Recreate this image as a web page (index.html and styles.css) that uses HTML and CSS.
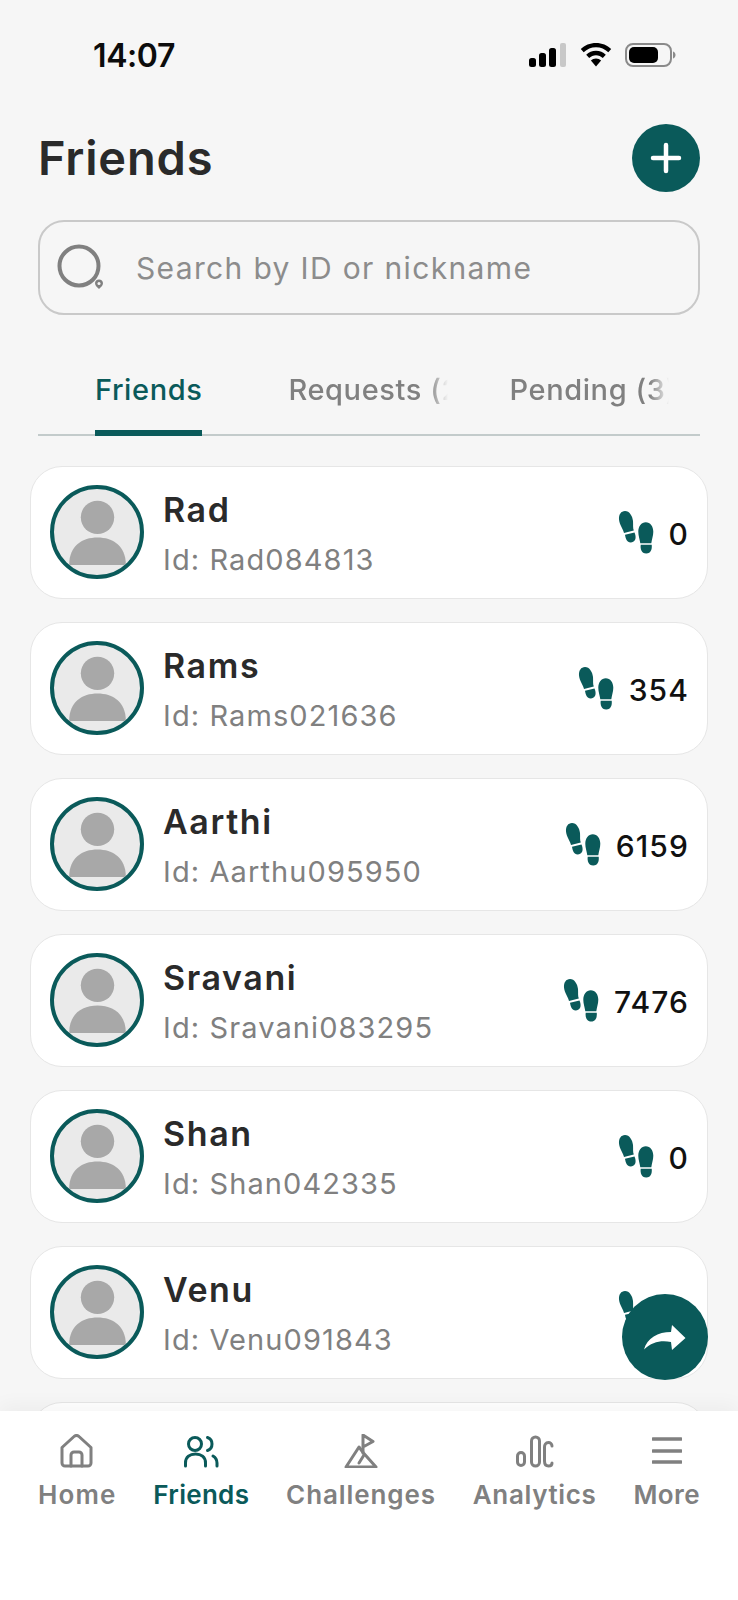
FILE: index.html
```html
<!DOCTYPE html>
<html lang="en">
<head>
<meta charset="utf-8">
<title>Friends</title>
<link rel="stylesheet" href="styles.css">
</head>
<body>
<main class="screen">
  <div class="status">
    <span class="time">14:07</span>
    <div class="status-icons">
      <svg class="signal" width="38" height="24" viewBox="0 0 38 24"><rect x="0" y="15" width="7" height="9" rx="2.5"/><rect x="10" y="10" width="7" height="14" rx="2.5"/><rect x="20" y="5" width="7" height="19" rx="2.5"/><rect class="signal-off" x="31" y="0" width="6" height="24" rx="2"/></svg>
      <svg class="wifi" width="32" height="24" viewBox="0 0 32 24"><path d="M16 0C10 0 4.700 2.300 .8 6l2.900 3.300C7 6.200 11.300 4.300 16 4.300s9 1.900 12.300 5L31.200 6C27.300 2.300 22 0 16 0z"/><path d="M16 7.800c-3.800 0-7.200 1.500-9.800 3.900l3 3.300c1.800-1.700 4.200-2.800 6.800-2.800s5 1.100 6.800 2.800l3-3.300C23.200 9.300 19.800 7.800 16 7.800z"/><path d="M16 15.500c-2 0-3.800.8-5.100 2L16 23.500l5.100-6c-1.300-1.200-3.100-2-5.100-2z"/></svg>
      <svg class="battery" width="52" height="24" viewBox="0 0 52 24"><rect x="1" y="1" width="45" height="22" rx="7" fill="none" stroke="#8a8a8a" stroke-width="2"/><rect x="4" y="4" width="29" height="16" rx="5"/><path class="nub" d="M48 8.500c1.800.6 2.500 2 2.500 3.500s-.7 2.900-2.500 3.500z"/></svg>
    </div>
  </div>

  <header class="title-row">
    <h1 class="title">Friends</h1>
    <button class="add" aria-label="Add friend"><svg width="34" height="34" viewBox="0 0 34 34"><path d="M4 17h26M17 4v26" stroke="#fff" stroke-width="4.500" stroke-linecap="round"/></svg></button>
  </header>

  <div class="search">
    <svg class="search-icon" width="48" height="48" viewBox="0 0 48 48"><circle cx="22" cy="22" r="19.500" fill="none" stroke="#808080" stroke-width="4"/><path d="M42 35.500c2.400 0 4 1.700 4 3.700 0 2.300-2.400 4.300-4 5.800-1.600-1.500-4-3.500-4-5.800 0-2 1.600-3.700 4-3.700z" fill="#808080"/><circle cx="42" cy="39.500" r="1.500" fill="#f6f6f6"/></svg>
    <span class="search-text">Search by ID or nickname</span>
  </div>

  <nav class="tabs">
    <span class="tab tab-active">Friends</span>
    <span class="tab tab-requests"><span class="tab-clip">Requests (2)</span></span>
    <span class="tab tab-pending"><span class="tab-clip">Pending (3)</span></span>
  </nav>

  <section class="list">
    <article class="card">
      <div class="avatar"><svg viewBox="0 0 85 85"><circle cx="43" cy="28" r="16.500"/><path d="M15 75C15 56 28 48 43 48s28 8 28 27z"/></svg></div>
      <div class="who"><div class="name">Rad</div><div class="uid">Id: Rad084813</div></div>
      <div class="steps"><svg class="feet" width="36" height="44" viewBox="0 0 36 44"><use href="#feet"/></svg><span>0</span></div>
    </article>
    <article class="card">
      <div class="avatar"><svg viewBox="0 0 85 85"><circle cx="43" cy="28" r="16.500"/><path d="M15 75C15 56 28 48 43 48s28 8 28 27z"/></svg></div>
      <div class="who"><div class="name">Rams</div><div class="uid">Id: Rams021636</div></div>
      <div class="steps"><svg class="feet" width="36" height="44" viewBox="0 0 36 44"><use href="#feet"/></svg><span>354</span></div>
    </article>
    <article class="card">
      <div class="avatar"><svg viewBox="0 0 85 85"><circle cx="43" cy="28" r="16.500"/><path d="M15 75C15 56 28 48 43 48s28 8 28 27z"/></svg></div>
      <div class="who"><div class="name">Aarthi</div><div class="uid">Id: Aarthu095950</div></div>
      <div class="steps"><svg class="feet" width="36" height="44" viewBox="0 0 36 44"><use href="#feet"/></svg><span>6159</span></div>
    </article>
    <article class="card">
      <div class="avatar"><svg viewBox="0 0 85 85"><circle cx="43" cy="28" r="16.500"/><path d="M15 75C15 56 28 48 43 48s28 8 28 27z"/></svg></div>
      <div class="who"><div class="name">Sravani</div><div class="uid">Id: Sravani083295</div></div>
      <div class="steps"><svg class="feet" width="36" height="44" viewBox="0 0 36 44"><use href="#feet"/></svg><span>7476</span></div>
    </article>
    <article class="card">
      <div class="avatar"><svg viewBox="0 0 85 85"><circle cx="43" cy="28" r="16.500"/><path d="M15 75C15 56 28 48 43 48s28 8 28 27z"/></svg></div>
      <div class="who"><div class="name">Shan</div><div class="uid">Id: Shan042335</div></div>
      <div class="steps"><svg class="feet" width="36" height="44" viewBox="0 0 36 44"><use href="#feet"/></svg><span>0</span></div>
    </article>
    <article class="card">
      <div class="avatar"><svg viewBox="0 0 85 85"><circle cx="43" cy="28" r="16.500"/><path d="M15 75C15 56 28 48 43 48s28 8 28 27z"/></svg></div>
      <div class="who"><div class="name">Venu</div><div class="uid">Id: Venu091843</div></div>
      <div class="steps"><svg class="feet" width="36" height="44" viewBox="0 0 36 44"><use href="#feet"/></svg><span>0</span></div>
    </article>
    <article class="card"></article>
  </section>

  <button class="fab" aria-label="Share"><svg width="42" height="25" viewBox="0 0 42 25"><path d="M0 24.500C3 13 14 7 27 7L28 0L41.500 13L28 25L27 17C17 15 8 17 0 24.500z" fill="#fff"/></svg></button>

  <nav class="bottom">
    <div class="nav-item nav-home">
      <svg width="34" height="34" viewBox="0 0 34 34" class="nav-icon"><path d="M2 13.500V29a3 3 0 0 0 3 3H28a3 3 0 0 0 3-3V13.500L19 2.500a3.500 3.500 0 0 0-5 0z"/><path d="M11 32V21a3 3 0 0 1 3-3h5a3 3 0 0 1 3 3v11"/></svg>
      <span>Home</span>
    </div>
    <div class="nav-item nav-active">
      <svg width="36" height="34" viewBox="0 0 36 34" class="nav-icon"><circle cx="12" cy="10" r="6.500"/><path d="M24.500 3.500c3 1 4.500 3.500 4.500 6.500s-1.500 5.500-4.500 6.500"/><path d="M2.500 32v-3c0-6 4.500-9 10-9s10 3 10 9v3"/><path d="M30 22c2.500 1.500 4 4 4 7v3"/></svg>
      <span>Friends</span>
    </div>
    <div class="nav-item">
      <svg width="34" height="34" viewBox="0 0 34 34" class="nav-icon"><path d="M2 33 15 13l4.500 6L32 33z"/><path d="M19 19V1l10 6.500-10 5.500"/><path d="M20 21l-5 8"/></svg>
      <span>Challenges</span>
    </div>
    <div class="nav-item nav-analytics">
      <svg width="38" height="34" viewBox="0 0 38 34" class="nav-icon"><rect x="1.500" y="18.500" width="7" height="13" rx="3.500"/><rect x="15.500" y="3" width="8" height="29" rx="4"/><path d="M36 12C36 9.500 34 8.500 32.500 8.500 29.500 8.500 28.500 11 28.500 13V27C28.500 30 30 32 32.500 32 34.500 32 36 31 36 29"/></svg>
      <span>Analytics</span>
    </div>
    <div class="nav-item nav-last">
      <svg width="30" height="34" viewBox="0 0 30 34" class="nav-icon nav-more"><path d="M1 5h28M1 17h28M1 28h28"/></svg>
      <span>More</span>
    </div>
  </nav>
</main>

<svg class="defs" width="0" height="0" aria-hidden="true">
  <defs>
    <g id="feet" fill="#0a5a5a">
      <path d="M7 1C11.500 1 14.500 6 15 11c.3 4-.3 7 .8 9.500L6 23C5.500 19.500 1.500 15 1 9.500.7 4.500 3 1 7 1z"/>
      <path d="M7 24.800l9.500-2.300C18.500 27 18 32 13 32.500 9 32.800 7.500 28.500 7 24.800z"/>
      <path d="M27.800 12.300c4.400 0 7.500 3.900 7.500 9.500 0 4-1.500 7.800-2 11.500h-11c-.5-3.700-2-7.500-2-11.500 0-5.600 3.100-9.500 7.500-9.500z"/>
      <path d="M22.700 34.800h11c.5 3.800-.5 8.700-5.500 8.700s-6-4.900-5.500-8.700z"/>
    </g>
  </defs>
</svg>
</body>
</html>
```
FILE: styles.css
```css
* { box-sizing: border-box; }
html, body { margin: 0; padding: 0; }
body { font-family: Inter, "Noto Sans", sans-serif; background: #f6f6f6; }
.defs { position: absolute; }

.screen {
  position: relative;
  width: 738px;
  height: 1600px;
  overflow: hidden;
  background: #f6f6f6;
}

.status {
  display: flex;
  justify-content: space-between;
  align-items: center;
  height: 110px;
  padding: 0 61px 0 93px;
}
.time { font-size: 32px; font-weight: 600; color: #0c0c0c; letter-spacing: -0.4px; }
.status-icons { display: flex; align-items: center; gap: 13px; }
.status-icons svg { display: block; fill: #000; }
.signal-off { fill: #c8c8c8; }
.nub { fill: #8a8a8a; }

.title-row {
  display: flex;
  justify-content: space-between;
  align-items: center;
  margin-top: 14px;
  padding: 0 38px 0 38px;
}
.title { margin: 0; padding-bottom: 2px; font-size: 47px; font-weight: 600; color: #2a2a2a; letter-spacing: .8px; }
.add {
  display: flex;
  align-items: center;
  justify-content: center;
  width: 68px;
  height: 68px;
  padding: 0;
  border: 0;
  border-radius: 50%;
  background: #0a5a5a;
}

.search {
  display: flex;
  align-items: center;
  gap: 31px;
  height: 95px;
  margin: 28px 38px 0;
  padding-left: 17px;
  border: 2px solid #c9c9c9;
  border-radius: 26px;
}
.search-icon { flex: none; }
.search-text { font-size: 30px; color: #8c8c8c; letter-spacing: 1.35px; }

.tabs {
  display: flex;
  align-items: flex-end;
  height: 121px;
  margin: 0 38px;
  padding-left: 57px;
  border-bottom: 2px solid #c3cbcb;
  font-size: 29px;
  font-weight: 500;
  color: #808080;
  letter-spacing: .6px;
}
.tab { height: 64px; margin-bottom: -2px; white-space: nowrap; }
.tab-active {
  color: #0a5a5a;
  border-bottom: 6px solid #0a5a5a;
  border-radius: 6px 6px 0 0;
}
.tab-requests { width: 160px; margin-left: 86px; }
.tab-pending { width: 160px; margin-left: 61px; }
.tab-clip {
  display: block;
  overflow: hidden;
  -webkit-mask-image: linear-gradient(to right, #000 88%, transparent 100%);
  mask-image: linear-gradient(to right, #000 88%, transparent 100%);
}

.list {
  display: flex;
  flex-direction: column;
  gap: 23px;
  margin: 30px 30px 0;
}
.card {
  display: flex;
  flex: none;
  align-items: center;
  height: 133px;
  padding: 0 18px 0 19px;
  background: #fff;
  border: 1px solid #e6e6e6;
  border-radius: 32px;
}
.avatar {
  flex: none;
  width: 94px;
  height: 94px;
  margin-top: -2px;
  border: 4.500px solid #0a5a5a;
  border-radius: 50%;
  background: #eaeaea;
  overflow: hidden;
}
.avatar svg { display: block; width: 100%; height: 100%; fill: #a8a8a8; }
.who { flex: 1; margin-left: 19px; padding-top: 5px; }
.name { font-size: 34px; font-weight: 600; line-height: 40px; color: #2a2a2a; letter-spacing: 1.6px; }
.uid { margin-top: 10px; font-size: 29px; line-height: 40px; color: #808080; letter-spacing: 1.1px; }
.steps { display: flex; align-items: center; gap: 15px; padding-top: 2px; font-size: 30px; font-weight: 500; color: #111; letter-spacing: 1.1px; }
.feet { display: block; margin-top: -4px; }

.fab {
  position: absolute;
  left: 622px;
  top: 1294px;
  display: flex;
  align-items: center;
  justify-content: center;
  width: 86px;
  height: 86px;
  padding: 0;
  border: 0;
  border-radius: 50%;
  background: #0a5a5a;
}

.bottom {
  position: absolute;
  left: 0;
  right: 0;
  bottom: 0;
  display: flex;
  justify-content: space-between;
  height: 189px;
  padding: 23px 38px 0;
  background: #fff;
  box-shadow: 0 -6px 18px rgba(0, 0, 0, .04);
}
.nav-item {
  display: flex;
  flex-direction: column;
  align-items: center;
  gap: 10px;
  font-size: 26px;
  font-weight: 600;
  line-height: 34px;
  color: #808080;
  letter-spacing: .9px;
}
.nav-home { letter-spacing: 1.1px; }
.nav-analytics { letter-spacing: .65px; }
.nav-last { letter-spacing: .4px; }
.nav-icon { display: block; fill: none; stroke: #808080; stroke-width: 3; stroke-linecap: round; stroke-linejoin: round; }
.nav-more { stroke-width: 3.500; }
.nav-active { color: #0a5a5a; letter-spacing: .3px; }
.nav-active .nav-icon { stroke: #0a5a5a; }
```
